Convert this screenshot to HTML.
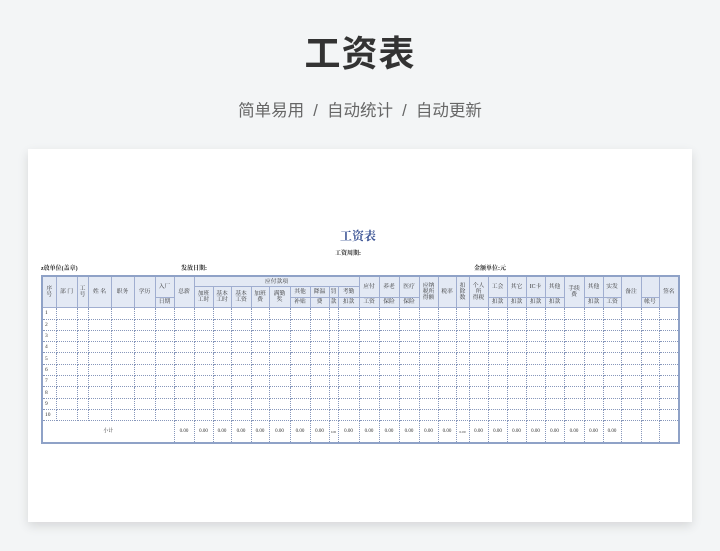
<!DOCTYPE html>
<html><head><meta charset="utf-8"><style>
*{margin:0;padding:0;box-sizing:border-box}
body{width:720px;height:551px;background:#f3f5f6;position:relative;overflow:hidden;font-family:"Liberation Sans","Noto Sans CJK SC",sans-serif}
.h1{position:absolute;left:0;width:720px;top:32px;text-align:center;font-size:36px;font-weight:bold;color:#333;line-height:44px;letter-spacing:1px}
.sub{position:absolute;left:0;width:720px;top:100px;text-align:center;font-size:16.5px;color:#666;line-height:22px}
.card{position:absolute;left:28px;top:149px;width:664px;height:373px;background:#fff;box-shadow:0 4px 10px rgba(0,0,0,.12)}
.t{position:absolute;font-family:"Liberation Serif","Noto Serif CJK SC",serif;color:#222;white-space:nowrap}
table{position:absolute;left:41px;top:275px;border-collapse:collapse;table-layout:fixed;border:2px solid #8fa2c7;font-family:"Liberation Serif","Noto Serif CJK SC",serif}
td{border:1px dotted #8797bb;font-size:5.5px;line-height:6px;text-align:center;color:#333;overflow:hidden;padding:0;white-space:nowrap}
thead td{background:#e3e9f4;border:1px solid #a0aed0;font-size:5.8px}
tr.h td{height:10.6px}
tr.d td{height:11.3px;text-align:left;padding-left:2px}
tr.s td{height:22px;font-size:5px}
</style></head><body>
<div class="h1">工资表</div>
<div class="sub">简单易用 &nbsp;/ &nbsp;自动统计 &nbsp;/ &nbsp;自动更新</div>
<div class="card"></div>
<div class="t" style="left:340px;top:227px;font-size:12px;font-weight:bold;color:#3b5394">工资表</div>
<div class="t" style="left:335px;top:248px;font-size:6px;font-weight:bold">工资周期:</div>
<div class="t" style="left:41px;top:263px;font-size:6px;font-weight:bold">z放单位(盖章)</div>
<div class="t" style="left:181px;top:263px;font-size:6px;font-weight:bold">发放日期:</div>
<div class="t" style="left:474px;top:263px;font-size:6px;font-weight:bold">金额单位:元</div>
<table>
<colgroup>
<col style="width:14px"><col style="width:21px"><col style="width:11px"><col style="width:23px"><col style="width:23px"><col style="width:21px"><col style="width:19px"><col style="width:20px">
<col style="width:19px"><col style="width:18px"><col style="width:20px"><col style="width:18px"><col style="width:21px"><col style="width:20px"><col style="width:19px"><col style="width:9px"><col style="width:21px">
<col style="width:20px"><col style="width:20px"><col style="width:20px"><col style="width:19px"><col style="width:18px"><col style="width:13px"><col style="width:19px">
<col style="width:19px"><col style="width:19px"><col style="width:19px"><col style="width:19px"><col style="width:20px"><col style="width:19px"><col style="width:18px"><col style="width:20px"><col style="width:18px"><col style="width:20px">
</colgroup>
<thead>
<tr class="h">
<td rowspan="3">序<br>号</td><td rowspan="3">部 门</td><td rowspan="3">工<br>号</td><td rowspan="3">姓 名</td><td rowspan="3">职务</td><td rowspan="3">学历</td><td rowspan="2">入厂</td><td rowspan="3">总薪</td>
<td colspan="9">应付款项</td>
<td rowspan="2">应付</td><td rowspan="2">养老</td><td rowspan="2">医疗</td><td rowspan="3">应纳<br>税所<br>得额</td><td rowspan="3">税率</td><td rowspan="3">扣<br>除<br>数</td><td rowspan="3">个人<br>所<br>得税</td>
<td rowspan="2">工会</td><td rowspan="2">其它</td><td rowspan="2">IC卡</td><td rowspan="2">其他</td><td rowspan="3">手续<br>费</td><td rowspan="2">其他</td><td rowspan="2">实发</td><td rowspan="3">备注</td><td rowspan="2"></td><td rowspan="3">签名</td>
</tr>
<tr class="h">
<td rowspan="2">加班<br>工时</td><td rowspan="2">基本<br>工时</td><td rowspan="2">基本<br>工资</td><td rowspan="2">加班<br>费</td><td rowspan="2">满勤<br>奖</td><td>其他</td><td>降温</td><td>罚</td><td>考勤</td>
</tr>
<tr class="h">
<td>日期</td><td>补贴</td><td>费</td><td>款</td><td>扣款</td><td>工资</td><td>保险</td><td>保险</td><td>扣款</td><td>扣款</td><td>扣款</td><td>扣款</td><td>扣款</td><td>工资</td><td>帐号</td>
</tr>
</thead>
<tbody>
<tr class="d"><td>1</td><td></td><td></td><td></td><td></td><td></td><td></td><td></td><td></td><td></td><td></td><td></td><td></td><td></td><td></td><td></td><td></td><td></td><td></td><td></td><td></td><td></td><td></td><td></td><td></td><td></td><td></td><td></td><td></td><td></td><td></td><td></td><td></td><td></td></tr>
<tr class="d"><td>2</td><td></td><td></td><td></td><td></td><td></td><td></td><td></td><td></td><td></td><td></td><td></td><td></td><td></td><td></td><td></td><td></td><td></td><td></td><td></td><td></td><td></td><td></td><td></td><td></td><td></td><td></td><td></td><td></td><td></td><td></td><td></td><td></td><td></td></tr>
<tr class="d"><td>3</td><td></td><td></td><td></td><td></td><td></td><td></td><td></td><td></td><td></td><td></td><td></td><td></td><td></td><td></td><td></td><td></td><td></td><td></td><td></td><td></td><td></td><td></td><td></td><td></td><td></td><td></td><td></td><td></td><td></td><td></td><td></td><td></td><td></td></tr>
<tr class="d"><td>4</td><td></td><td></td><td></td><td></td><td></td><td></td><td></td><td></td><td></td><td></td><td></td><td></td><td></td><td></td><td></td><td></td><td></td><td></td><td></td><td></td><td></td><td></td><td></td><td></td><td></td><td></td><td></td><td></td><td></td><td></td><td></td><td></td><td></td></tr>
<tr class="d"><td>5</td><td></td><td></td><td></td><td></td><td></td><td></td><td></td><td></td><td></td><td></td><td></td><td></td><td></td><td></td><td></td><td></td><td></td><td></td><td></td><td></td><td></td><td></td><td></td><td></td><td></td><td></td><td></td><td></td><td></td><td></td><td></td><td></td><td></td></tr>
<tr class="d"><td>6</td><td></td><td></td><td></td><td></td><td></td><td></td><td></td><td></td><td></td><td></td><td></td><td></td><td></td><td></td><td></td><td></td><td></td><td></td><td></td><td></td><td></td><td></td><td></td><td></td><td></td><td></td><td></td><td></td><td></td><td></td><td></td><td></td><td></td></tr>
<tr class="d"><td>7</td><td></td><td></td><td></td><td></td><td></td><td></td><td></td><td></td><td></td><td></td><td></td><td></td><td></td><td></td><td></td><td></td><td></td><td></td><td></td><td></td><td></td><td></td><td></td><td></td><td></td><td></td><td></td><td></td><td></td><td></td><td></td><td></td><td></td></tr>
<tr class="d"><td>8</td><td></td><td></td><td></td><td></td><td></td><td></td><td></td><td></td><td></td><td></td><td></td><td></td><td></td><td></td><td></td><td></td><td></td><td></td><td></td><td></td><td></td><td></td><td></td><td></td><td></td><td></td><td></td><td></td><td></td><td></td><td></td><td></td><td></td></tr>
<tr class="d"><td>9</td><td></td><td></td><td></td><td></td><td></td><td></td><td></td><td></td><td></td><td></td><td></td><td></td><td></td><td></td><td></td><td></td><td></td><td></td><td></td><td></td><td></td><td></td><td></td><td></td><td></td><td></td><td></td><td></td><td></td><td></td><td></td><td></td><td></td></tr>
<tr class="d"><td>10</td><td></td><td></td><td></td><td></td><td></td><td></td><td></td><td></td><td></td><td></td><td></td><td></td><td></td><td></td><td></td><td></td><td></td><td></td><td></td><td></td><td></td><td></td><td></td><td></td><td></td><td></td><td></td><td></td><td></td><td></td><td></td><td></td><td></td></tr>
<tr class="s"><td colspan="7">小计</td><td>0.00</td><td>0.00</td><td>0.00</td><td>0.00</td><td>0.00</td><td>0.00</td><td>0.00</td><td>0.00</td><td style="font-size:3px">0.00</td><td>0.00</td><td>0.00</td><td>0.00</td><td>0.00</td><td>0.00</td><td>0.00</td><td style="font-size:3.5px">0.00</td><td>0.00</td><td>0.00</td><td>0.00</td><td>0.00</td><td>0.00</td><td>0.00</td><td>0.00</td><td>0.00</td><td></td><td></td><td></td></tr>
</tbody>
</table>
</body></html>
